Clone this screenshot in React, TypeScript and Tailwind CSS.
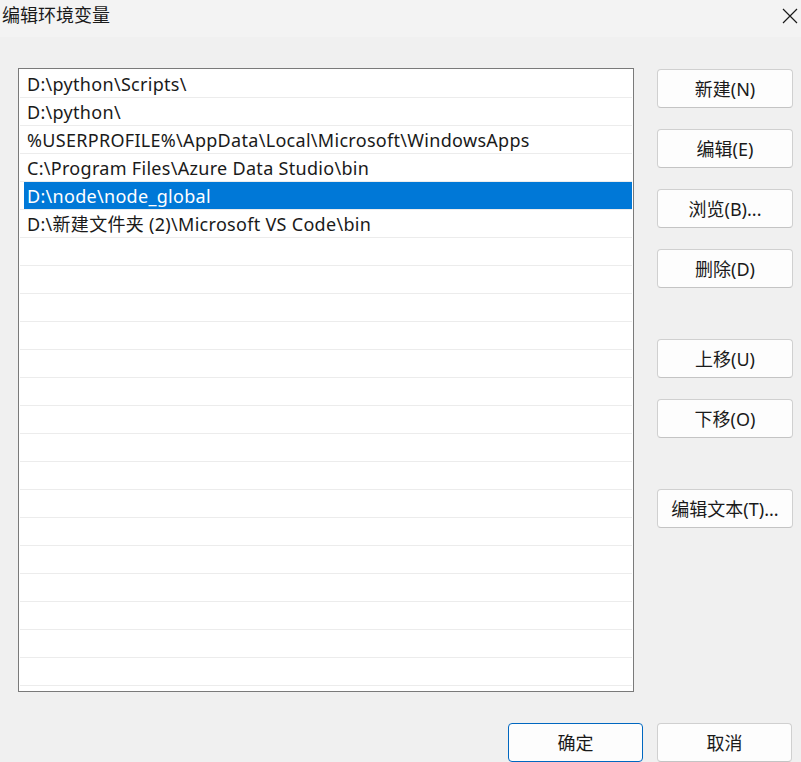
import React from "react"

const font = { fontFamily: '"Noto Sans", "Noto Sans CJK SC", sans-serif' }

const paths = [
  "D:\\python\\Scripts\\",
  "D:\\python\\",
  "%USERPROFILE%\\AppData\\Local\\Microsoft\\WindowsApps",
  "C:\\Program Files\\Azure Data Studio\\bin",
  "D:\\node\\node_global",
  "D:\\新建文件夹 (2)\\Microsoft VS Code\\bin",
]

const selected = 4
const totalRows = 22

function Btn({ label, primary = false, narrow = false }: { label: string; primary?: boolean; narrow?: boolean }) {
  const base = "h-[39px] rounded-[4px] border bg-[#fdfdfd] text-[18px] leading-[24px] text-[#1a1a1a]"
  const w = narrow ? " w-[135px]" : " w-[136px]"
  const b = primary ? " border-[#0067c0]" : " border-[#d0d0d0] border-b-[#c4c4c4]"
  return <button className={base + w + b}>{label}</button>
}

export default function App() {
  const rows = Array.from({ length: totalRows }, (_, i) => paths[i] ?? "")

  return (
    <div className="w-[801px] h-[762px] overflow-hidden bg-[#f0f0f0] flex flex-col" style={font}>
      {/* title bar */}
      <div className="h-[37px] shrink-0 bg-[#f3f3f3] flex items-start justify-between">
        <span className="pl-[2px] pt-[2px] text-[18px] leading-[26px] text-[#1a1a1a]">编辑环境变量</span>
        <svg className="mt-[8px] mr-[3px]" width="16" height="16" viewBox="0 0 16 16">
          <path d="M1 1L15 15M15 1L1 15" stroke="#1a1a1a" strokeWidth="1.2" />
        </svg>
      </div>

      <div className="flex pl-[18px] pt-[31px]">
        {/* path list */}
        <div className="w-[616px] h-[624px] border border-[#7a7a7a] bg-white pt-[1px] pl-[1px] pr-[1px] overflow-hidden">
          {rows.map((p, i) => (
            <div key={i} className="h-[28px] border-b border-[#ececec] pl-[4px]">
              <div
                className={
                  i === selected
                    ? "h-[27px] pl-[3px] bg-[#0078d7] text-white text-[18px] tracking-[0.3px] leading-[28px] whitespace-nowrap"
                    : "h-[27px] pl-[3px] text-[#1a1a1a] text-[18px] tracking-[0.3px] leading-[28px] whitespace-nowrap"
                }
              >
                {p}
              </div>
            </div>
          ))}
        </div>

        {/* side buttons */}
        <div className="ml-[23px] pt-[1px] flex flex-col">
          <div className="flex flex-col gap-[21px]">
            <Btn label="新建(N)" />
            <Btn label="编辑(E)" />
            <Btn label="浏览(B)..." />
            <Btn label="删除(D)" />
          </div>
          <div className="mt-[51px] flex flex-col gap-[21px]">
            <Btn label="上移(U)" />
            <Btn label="下移(O)" />
          </div>
          <div className="mt-[51px]">
            <Btn label="编辑文本(T)..." />
          </div>
        </div>
      </div>

      {/* bottom buttons */}
      <div className="flex justify-end gap-[14px] pr-[9px] pt-[31px]">
        <Btn label="确定" primary narrow />
        <Btn label="取消" narrow />
      </div>
    </div>
  )
}
